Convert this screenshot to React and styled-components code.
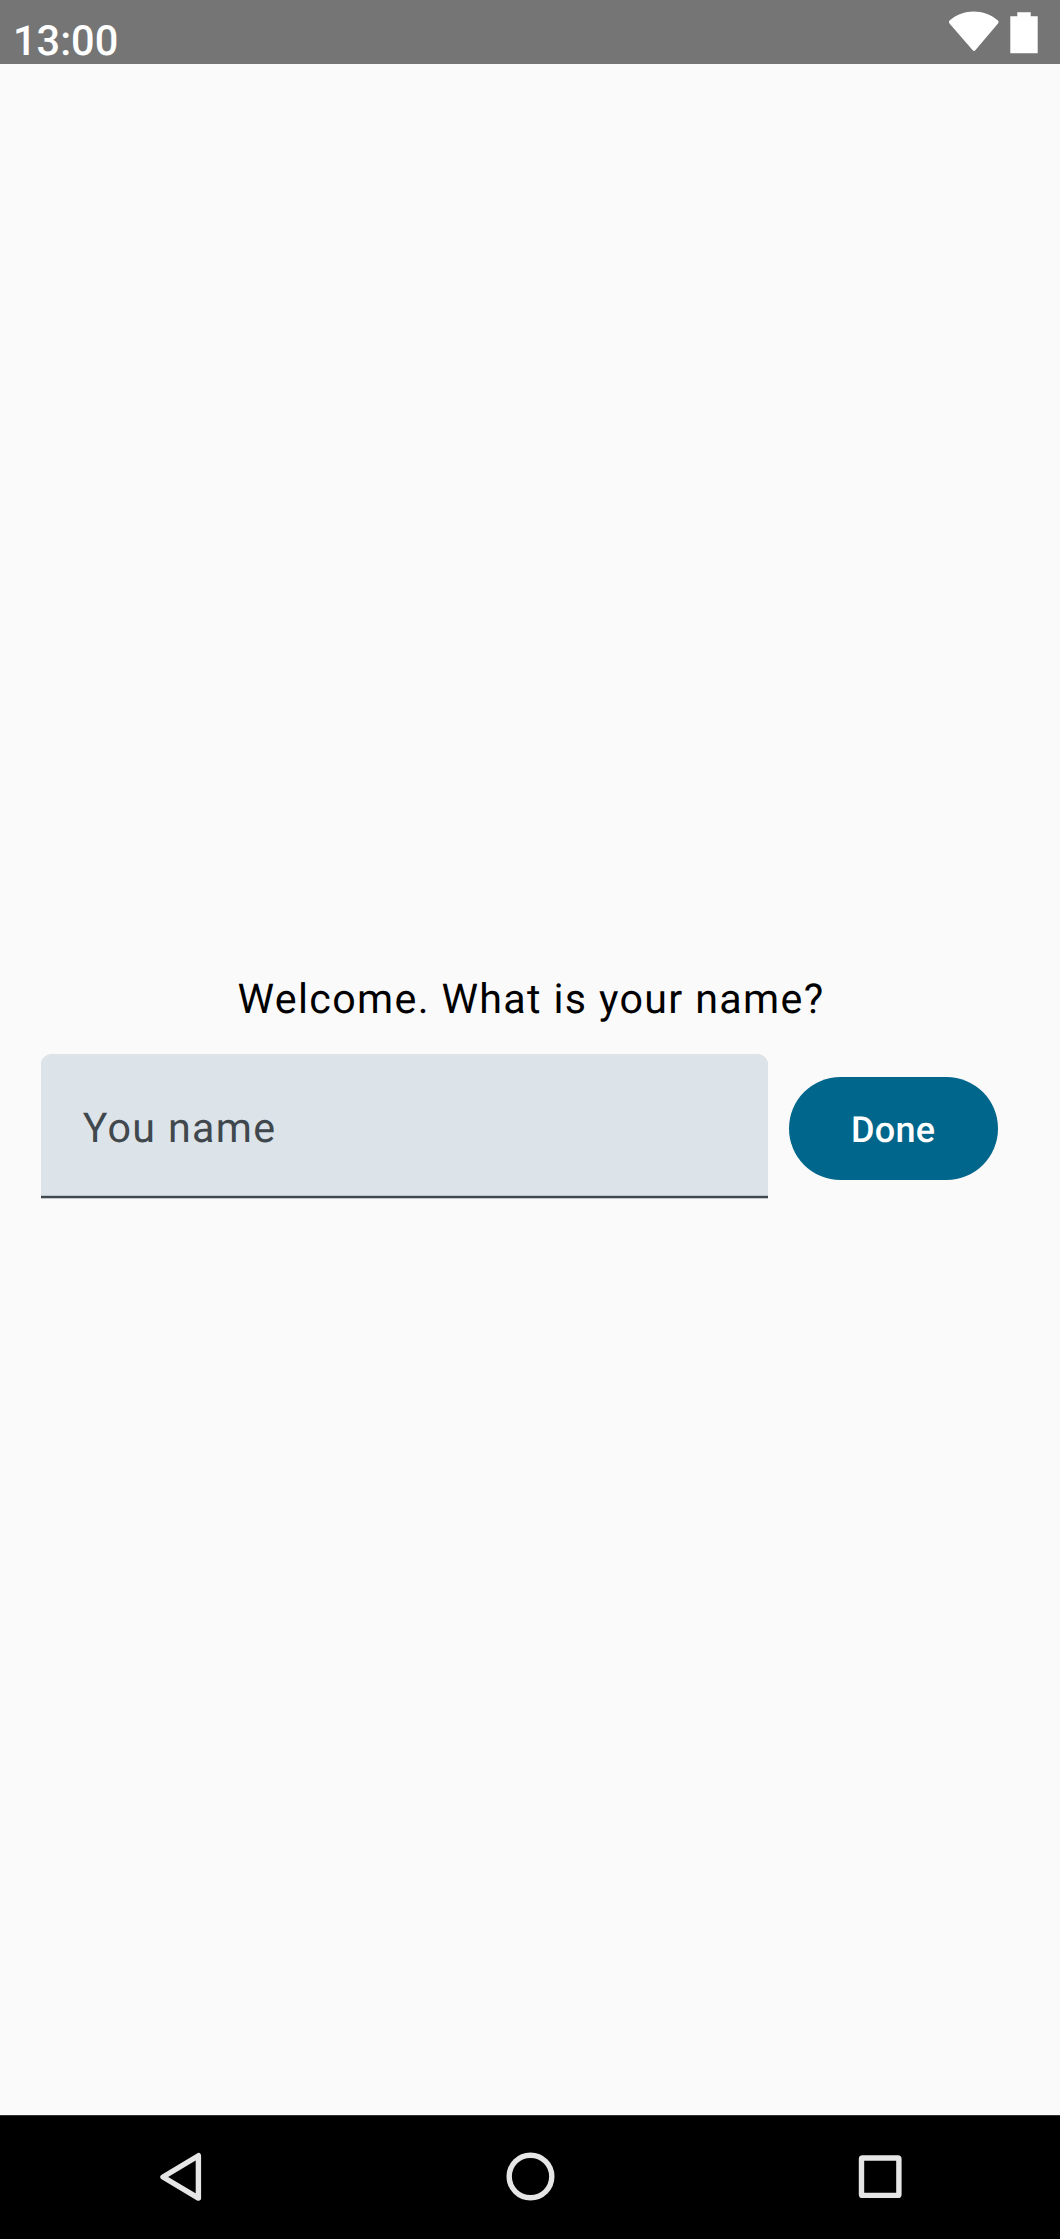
import React from "react";
import styled, { createGlobalStyle } from "styled-components";

const GlobalStyle = createGlobalStyle`
  *, *::before, *::after { box-sizing: border-box; }
  body { margin: 0; background: #fafafa; }
`;

const Screen = styled.div`
  display: flex;
  flex-direction: column;
  width: 1060px;
  height: 2239px;
  background: #fafafa;
  font-family: Roboto, "Liberation Sans", sans-serif;
  text-rendering: geometricPrecision;
  overflow: hidden;
`;

const StatusBar = styled.header`
  display: flex;
  justify-content: space-between;
  height: 64px;
  flex: none;
  padding: 0 20px 0 13px;
  background: #757575;
  color: #fff;
`;

const Clock = styled.span`
  padding-top: 18px;
  font-size: 41.5px;
  line-height: 48px;
  font-weight: 500;
`;

const StatusIcons = styled.svg`
  display: block;
  width: 92px;
  height: 64px;
`;

const Content = styled.main`
  display: flex;
  flex: 1;
  flex-direction: column;
  align-items: center;
  padding-top: 905px;
`;

const Prompt = styled.h1`
  margin: 0 0 23px;
  padding-left: 2px;
  font-size: 41.2px;
  line-height: 62px;
  font-weight: 400;
  letter-spacing: 1.34px;
  color: #000;
`;

const Form = styled.div`
  display: flex;
  align-items: center;
  gap: 21px;
  width: 100%;
  padding-left: 41.2px;
`;

const Field = styled.label`
  display: flex;
  align-items: center;
  width: 727px;
  height: 144px;
  padding: 8px 41.6px 0;
  border-radius: 10.3px 10.3px 0 0;
  border-bottom: 2px solid #40484d;
  box-shadow: 0 1px 0 #c1c7cb, inset 0 -1px 0 #bcc4c9;
  background: #dce3e9;
  color: #40484d;
  font-size: 41.2px;
  line-height: 62px;
  letter-spacing: 1.32px;
`;

const Button = styled.button`
  width: 209px;
  height: 103px;
  margin-top: 5px;
  padding: 3px 1px 0 0;
  border: 0;
  border-radius: 52px;
  background: #00668b;
  color: #fff;
  font: 500 36px/52px Roboto, "Liberation Sans", sans-serif;
  letter-spacing: 0.26px;
  text-rendering: geometricPrecision;
`;

const NavBar = styled.nav`
  display: flex;
  align-items: center;
  justify-content: space-between;
  flex: none;
  height: 124px;
  padding: 0 150px 1px;
  border-top: 1px solid #303333;
  background: #000;
`;

const NavIcon = styled.svg`
  display: block;
  width: 60px;
  height: 60px;
  fill: none;
  stroke: #e6e6e6;
  stroke-width: 5.4;
  stroke-linejoin: round;
`;

export default function App() {
  return (
    <>
      <GlobalStyle />
      <Screen>
        <StatusBar>
          <Clock>13:00</Clock>
          <StatusIcons viewBox="948 0 92 64" fill="#fff">
            <path d="M949.5 20.5C963.5 8.5 984 8.5 998 20.5Q999.5 22 998 23.5L975.5 50Q974 51.8 972.5 50L949.5 23.5Q948.3 22 949.5 20.5Z" />
            <path d="M1017.3 12.3h13.4v4h7v37h-27.4v-37h7Z" />
          </StatusIcons>
        </StatusBar>
        <Content>
          <Prompt>Welcome. What is your name?</Prompt>
          <Form>
            <Field>You name</Field>
            <Button type="button">Done</Button>
          </Form>
        </Content>
        <NavBar>
          <NavIcon viewBox="150 2147 60 60">
            <path d="M163 2177 198.4 2155.7v42.4Z" />
          </NavIcon>
          <NavIcon viewBox="500 2147 60 60">
            <circle cx="530.5" cy="2176.5" r="21.3" />
          </NavIcon>
          <NavIcon viewBox="850 2147 60 60">
            <rect x="861.5" y="2158" width="37.4" height="37.4" rx="1" />
          </NavIcon>
        </NavBar>
      </Screen>
    </>
  );
}
